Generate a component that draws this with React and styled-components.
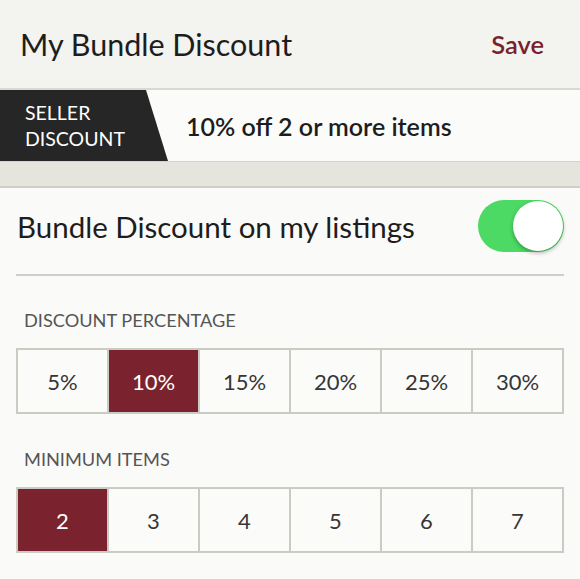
import React, { useState } from "react";
import styled, { createGlobalStyle } from "styled-components";

const GlobalStyle = createGlobalStyle`
  body {
    margin: 0;
    background: #fafaf8;
    font-family: Lato, "Open Sans", sans-serif;
    color: #1e1e1e;
  }
`;

const percentages = [5, 10, 15, 20, 25, 30];
const minimums = [2, 3, 4, 5, 6, 7];

const App = () => {
  const [enabled, setEnabled] = useState(true);
  const [percent, setPercent] = useState(10);
  const [minItems, setMinItems] = useState(2);

  return (
    <>
      <GlobalStyle />
      <Header>
        <Title>My Bundle Discount</Title>
        <SaveButton>Save</SaveButton>
      </Header>
      <Banner>
        <Tag>
          <span>SELLER</span>
          <span>DISCOUNT</span>
        </Tag>
        <Summary>
          {percent}% off {minItems} or more items
        </Summary>
      </Banner>
      <Band />
      <Content>
        <ToggleRow>
          <ToggleLabel>Bundle Discount on my listings</ToggleLabel>
          <Switch $on={enabled} onClick={() => setEnabled(!enabled)}>
            <Knob $on={enabled} />
          </Switch>
        </ToggleRow>

        <SectionLabel $top="32px">Discount Percentage</SectionLabel>
        <Options>
          {percentages.map((p) => (
            <Option
              key={p}
              $selected={p === percent}
              onClick={() => setPercent(p)}
            >
              {p}%
            </Option>
          ))}
        </Options>

        <SectionLabel $top="33px">Minimum Items</SectionLabel>
        <Options>
          {minimums.map((m) => (
            <Option
              key={m}
              $selected={m === minItems}
              onClick={() => setMinItems(m)}
            >
              {m}
            </Option>
          ))}
        </Options>
      </Content>
    </>
  );
};

const Header = styled.header`
  display: flex;
  align-items: center;
  justify-content: space-between;
  height: 88px;
  padding: 0 36px 0 20px;
  background: #f3f3ef;
  border-bottom: 2px solid #d9d9d3;
`;
const Title = styled.h1`
  margin: 0;
  font-size: 30.5px;
  font-weight: 400;
  color: #1d1d1d;
`;
const SaveButton = styled.button`
  background: none;
  border: none;
  padding: 0;
  font-family: inherit;
  font-size: 25.5px;
  font-weight: 600;
  color: #7a1f2c;
  cursor: pointer;
`;
const Banner = styled.div`
  display: flex;
  align-items: center;
  height: 71px;
  background: #fbfbf9;
`;
const Tag = styled.div`
  display: flex;
  flex-direction: column;
  justify-content: center;
  align-self: stretch;
  width: 168px;
  box-sizing: border-box;
  padding-left: 25px;
  background: #262626;
  clip-path: polygon(0 0, 146px 0, 168px 100%, 0 100%);
  color: #fff;
  font-size: 19.5px;
  line-height: 26px;
`;
const Summary = styled.div`
  margin-left: 18px;
  font-size: 25px;
  font-weight: 600;
  color: #1d1d1d;
`;
const Band = styled.div`
  height: 24px;
  background: #e5e4dd;
  border-top: 1px solid #d3d2cb;
  border-bottom: 2px solid #cfcec8;
`;
const Content = styled.main`
  padding: 0 16px;
`;
const ToggleRow = styled.div`
  display: flex;
  align-items: center;
  justify-content: space-between;
  padding: 12px 0 22px;
  border-bottom: 2px solid #cfcfca;
`;
const ToggleLabel = styled.span`
  padding-left: 1px;
  font-size: 29.5px;
  color: #1d1d1d;
`;
const Switch = styled.button`
  position: relative;
  width: 86px;
  height: 52px;
  padding: 0;
  border: none;
  border-radius: 26px;
  background: ${(p) => (p.$on ? "#4cd964" : "#e5e5e5")};
  cursor: pointer;
`;
const Knob = styled.span`
  position: absolute;
  top: 1px;
  left: ${(p) => (p.$on ? "35px" : "1px")};
  width: 50px;
  height: 50px;
  border-radius: 50%;
  background: #fff;
  box-shadow: 0 2px 4px rgba(0, 0, 0, 0.3);
`;
const SectionLabel = styled.div`
  margin: ${(p) => p.$top} 0 0 8px;
  font-size: 18.2px;
  line-height: 24px;
  text-transform: uppercase;
  color: #555;
`;
const Options = styled.div`
  display: grid;
  grid-template-columns: repeat(6, 1fr);
  margin-top: 16px;
  border: 2px solid #cbcbc4;
  background: #cbcbc4;
  gap: 2px;
`;
const Option = styled.button`
  height: 62px;
  border: none;
  padding: 0;
  font-family: inherit;
  font-size: 22px;
  font-weight: 400;
  color: ${(p) => (p.$selected ? "#fff" : "#363636")};
  background: ${(p) => (p.$selected ? "#7b222f" : "#fbfbf9")};
  cursor: pointer;
`;

export default App;
